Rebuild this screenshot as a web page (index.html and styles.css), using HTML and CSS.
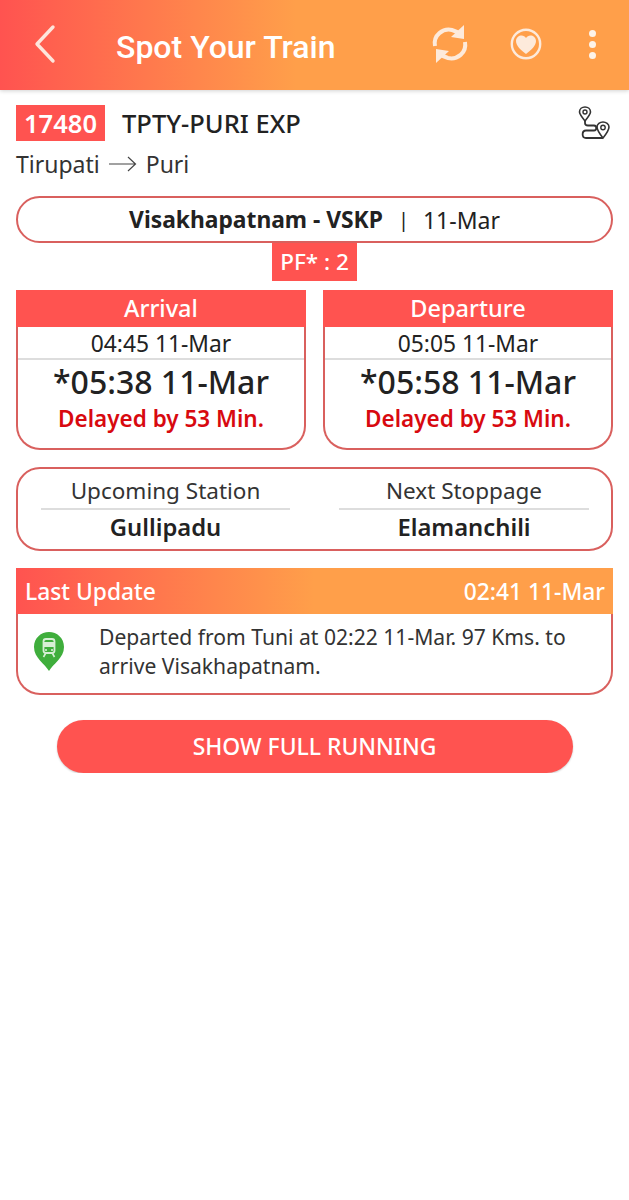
FILE: index.html
```html
<!DOCTYPE html>
<html lang="en">
<head>
    <meta charset="UTF-8">
    <meta name="viewport" content="width=device-width, initial-scale=1.0">
    <title>Spot Your Train</title>
    <link rel="stylesheet" href="styles.css">
</head>
<body>

    <header class="topbar">
        <svg class="icon-back" width="26" height="40" viewBox="0 0 26 40">
            <path d="M21 3 L5 20 L21 37" fill="none" stroke="#fde6dc" stroke-width="3.4" stroke-linecap="round" stroke-linejoin="round"/>
        </svg>
        <h1 class="topbar-title">Spot Your Train</h1>
        <svg class="icon-refresh" width="38" height="40" viewBox="0 0 38 40">
            <path d="M4 22 C2 11 12 4 21 6 C25 7 28 9 30 11" fill="none" stroke="#fdeadb" stroke-width="4"/>
            <path d="M33 1 L33 15 L20 13 Z" fill="#fdeadb"/>
            <path d="M34 18 C36 29 26 36 17 34 C13 33 10 31 8 29" fill="none" stroke="#fdeadb" stroke-width="4"/>
            <path d="M5 39 L5 25 L18 27 Z" fill="#fdeadb"/>
        </svg>
        <svg class="icon-heart" width="32" height="32" viewBox="0 0 32 32">
            <circle cx="16" cy="16" r="14.2" fill="none" stroke="#fdeadb" stroke-width="2.4"/>
            <path d="M16 26 C11 22 6 18 6 13 C6 9.5 9 7.5 11.5 7.5 C13.5 7.5 15 8.5 16 10 C17 8.5 18.5 7.5 20.5 7.5 C23 7.5 26 9.5 26 13 C26 18 21 22 16 26 Z" fill="#fdeadb"/>
        </svg>
        <div class="icon-more">
            <span></span><span></span><span></span>
        </div>
    </header>

    <main class="content">
        <div class="train-row">
            <span class="train-no">17480</span>
            <span class="train-name">TPTY-PURI EXP</span>
            <svg class="icon-route" width="32" height="34" viewBox="0 0 32 34">
                <path d="M7 15 C3 10 1.5 8 1.5 6 C1.5 3 4 1 7 1 C10 1 12.5 3 12.5 6 C12.5 8 11 10 7 15 Z" fill="none" stroke="#333" stroke-width="1.6"/>
                <circle cx="7" cy="6" r="2" fill="none" stroke="#333" stroke-width="1.4"/>
                <path d="M25 32 C21 27 19 24 19 21 C19 18 22 16 25 16 C28 16 31 18 31 21 C31 24 29 27 25 32 Z" fill="none" stroke="#333" stroke-width="1.6"/>
                <circle cx="25" cy="21.5" r="2.2" fill="none" stroke="#333" stroke-width="1.4"/>
                <path d="M7 15 L7 17 C7 19 8 19.5 10 19.5 L16 19.5 C19 19.5 19 24.5 16 24.5 L8 24.5 C3.5 24.5 3.5 32 8 32 L25 32" fill="none" stroke="#333" stroke-width="1.8"/>
            </svg>
        </div>

        <div class="route-row">
            <span>Tirupati</span>
            <svg class="icon-arrow" width="28" height="16" viewBox="0 0 28 16">
                <path d="M0 8 L26 8 M19 1 L26.5 8 L19 15" fill="none" stroke="#444" stroke-width="1.2"/>
            </svg>
            <span>Puri</span>
        </div>

        <div class="station-pill">
            <strong>Visakhapatnam - VSKP</strong>
            <span class="sep">|</span>
            <span>11-Mar</span>
        </div>
        <div class="pf-badge">PF* : 2</div>

        <section class="time-grid">
            <div class="time-card">
                <div class="time-head">Arrival</div>
                <div class="time-sched">04:45 11-Mar</div>
                <div class="time-actual">*05:38 11-Mar</div>
                <div class="time-delay">Delayed by 53 Min.</div>
            </div>
            <div class="time-card">
                <div class="time-head">Departure</div>
                <div class="time-sched">05:05 11-Mar</div>
                <div class="time-actual">*05:58 11-Mar</div>
                <div class="time-delay">Delayed by 53 Min.</div>
            </div>
        </section>

        <section class="stops-card">
            <div class="stop">
                <div class="stop-label">Upcoming Station</div>
                <div class="stop-name">Gullipadu</div>
            </div>
            <div class="stop">
                <div class="stop-label">Next Stoppage</div>
                <div class="stop-name">Elamanchili</div>
            </div>
        </section>

        <section class="update-card">
            <div class="update-head">
                <span>Last Update</span>
                <span>02:41 11-Mar</span>
            </div>
            <div class="update-body">
                <svg class="icon-pin" width="32" height="40" viewBox="0 0 32 40">
                    <path d="M16 40 C12 33 1 27 1 16 C1 7 8 1 16 1 C24 1 31 7 31 16 C31 27 20 33 16 40 Z" fill="#3fae3c"/>
                    <rect x="10.5" y="8" width="11" height="14" rx="2.5" fill="none" stroke="#d7efd5" stroke-width="1.8"/>
                    <rect x="11" y="11" width="10" height="5" fill="#d7efd5"/>
                    <circle cx="13" cy="19" r="1.1" fill="#d7efd5"/>
                    <circle cx="19" cy="19" r="1.1" fill="#d7efd5"/>
                    <path d="M12.5 22.5 L10.5 26 M19.5 22.5 L21.5 26" stroke="#d7efd5" stroke-width="1.6"/>
                </svg>
                <p class="update-text">Departed from Tuni at 02:22 11-Mar. 97 Kms. to arrive Visakhapatnam.</p>
            </div>
        </section>

        <div class="btn-row">
            <button class="btn-running">SHOW FULL RUNNING</button>
        </div>
    </main>

</body>
</html>
```

FILE: styles.css
```css
body {
    margin: 0;
    padding: 0;
    background-color: #fff;
    color: #222;
    font-family: "Noto Sans", "Open Sans", sans-serif;
}

.topbar {
    height: 90px;
    display: flex;
    align-items: center;
    background: linear-gradient(90deg, #ff5350 0%, #ff9f4a 47%, #ff9f4a 100%);
    box-shadow: 0 1px 4px rgba(0, 0, 0, 0.18);
}

.icon-back {
    margin-left: 32px;
    margin-top: -2px;
}

.topbar-title {
    margin: 3px 0 0 58px;
    width: 315px;
    color: #fff;
    font-family: Roboto, sans-serif;
    font-size: 32px;
    font-weight: 500;
    white-space: nowrap;
}

.icon-refresh {
    margin-top: -2px;
}

.icon-heart {
    margin-left: 41px;
    margin-top: -2px;
}

.icon-more {
    margin-left: 47px;
    margin-top: -2px;
    display: flex;
    flex-direction: column;
    gap: 4px;
}

.icon-more span {
    width: 7px;
    height: 7px;
    border-radius: 50%;
    background-color: #fdf3ea;
}

.content {
    padding: 15px 16px 0;
}

.train-row {
    display: flex;
    align-items: center;
    height: 36px;
}

.train-no {
    width: 89px;
    height: 36px;
    line-height: 36px;
    text-align: center;
    background-color: #ff5350;
    color: #fff;
    font-size: 25.5px;
    font-weight: 600;
}

.train-name {
    margin-left: 17px;
    font-size: 25.5px;
    font-weight: 500;
}

.icon-route {
    margin-left: auto;
    margin-right: 3px;
}

.route-row {
    display: flex;
    align-items: center;
    gap: 9px;
    height: 30px;
    margin-top: 8px;
    font-size: 23px;
    color: #333;
}

.station-pill {
    height: 47px;
    box-sizing: border-box;
    margin-top: 17px;
    display: flex;
    align-items: center;
    justify-content: center;
    border: 2px solid #d9605e;
    border-radius: 24px;
    font-size: 23px;
}

.station-pill strong {
    font-weight: 700;
    font-size: 22.8px;
}

.sep {
    margin: 0 14px 0 15px;
    font-size: 20px;
}

.pf-badge {
    width: 85px;
    height: 38px;
    line-height: 38px;
    margin: 0 auto;
    text-align: center;
    background-color: #ff5350;
    color: #fff;
    font-size: 22.5px;
    font-weight: 500;
}

.time-grid {
    display: grid;
    grid-template-columns: 290px 290px;
    justify-content: space-between;
    margin-top: 9px;
}

.time-card {
    height: 160px;
    box-sizing: border-box;
    border: 2px solid #d9605e;
    border-top: none;
    border-radius: 0 0 24px 24px;
    text-align: center;
}

.time-head {
    height: 37px;
    line-height: 37px;
    margin: 0 -2px;
    background-color: #ff5350;
    color: #fff;
    font-size: 23.5px;
    font-weight: 500;
}

.time-sched {
    height: 31px;
    line-height: 33px;
    font-size: 22.8px;
    border-bottom: 2px solid #ddd;
}

.time-actual {
    height: 44px;
    line-height: 44px;
    font-size: 32px;
    font-weight: 500;
}

.time-delay {
    height: 30px;
    line-height: 30px;
    font-size: 22.5px;
    font-weight: 600;
    color: #d8090f;
}

.stops-card {
    height: 84px;
    box-sizing: border-box;
    margin-top: 17px;
    padding: 8px 22px 0 23px;
    display: grid;
    grid-template-columns: 249px 250px;
    justify-content: space-between;
    border: 2px solid #d9605e;
    border-radius: 24px;
    text-align: center;
}

.stop-label {
    height: 33px;
    line-height: 27px;
    box-sizing: border-box;
    border-bottom: 2px solid #ddd;
    font-size: 22.5px;
    color: #333;
}

.stop-name {
    height: 36px;
    line-height: 34px;
    font-size: 23.8px;
    font-weight: 600;
}

.update-card {
    height: 127px;
    box-sizing: border-box;
    margin-top: 17px;
    border: 2px solid #d9605e;
    border-top: none;
    border-radius: 0 0 24px 24px;
}

.update-head {
    height: 46px;
    margin: 0 -2px;
    padding: 0 8px 0 9px;
    display: flex;
    align-items: center;
    justify-content: space-between;
    background: linear-gradient(90deg, #ff5350 0%, #ff9f4a 50%, #ff9f4a 100%);
    color: #fff;
    font-size: 22.8px;
    font-weight: 500;
}

.update-body {
    display: flex;
    align-items: flex-start;
}

.icon-pin {
    margin: 17px 0 0 15px;
    flex-shrink: 0;
}

.update-text {
    margin: 8px 30px 0 34px;
    font-size: 21.1px;
    line-height: 29px;
    color: #333;
}

.btn-row {
    display: flex;
    justify-content: center;
    margin-top: 25px;
}

.btn-running {
    width: 516px;
    height: 53px;
    border: none;
    border-radius: 27px;
    background-color: #ff5350;
    color: #fff;
    font-family: inherit;
    font-size: 22.9px;
    font-weight: 500;
    box-shadow: 0 1px 2px rgba(0, 0, 0, 0.2);
}
```
